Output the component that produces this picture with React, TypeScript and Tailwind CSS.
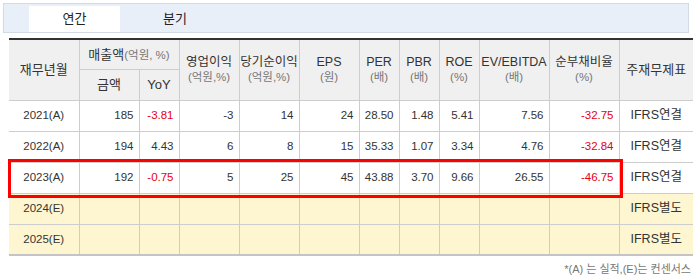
const FONT = { fontFamily: '"Liberation Sans", "Noto Sans CJK KR", sans-serif' };

type Row = {
  label: string;
  values: (string | null)[];
  basis: string;
  estimate?: boolean;
};

const ROWS: Row[] = [
  { label: "2021(A)", values: ["185", "-3.81", "-3", "14", "24", "28.50", "1.48", "5.41", "7.56", "-32.75"], basis: "IFRS연결" },
  { label: "2022(A)", values: ["194", "4.43", "6", "8", "15", "35.33", "1.07", "3.34", "4.76", "-32.84"], basis: "IFRS연결" },
  { label: "2023(A)", values: ["192", "-0.75", "5", "25", "45", "43.88", "3.70", "9.66", "26.55", "-46.75"], basis: "IFRS연결" },
  { label: "2024(E)", values: Array(10).fill(null), basis: "IFRS별도", estimate: true },
  { label: "2025(E)", values: Array(10).fill(null), basis: "IFRS별도", estimate: true },
];

// red values: YoY and 순부채비율 when negative
const RED_COLS = [1, 9];

function TwoLine({ top, unit }: { top: string; unit: string }) {
  return (
    <div className="flex flex-col items-center whitespace-nowrap leading-[15px]">
      <span className="text-[12.5px] text-[#333]">{top}</span>
      <span className="text-[11.5px] text-[#777]">{unit}</span>
    </div>
  );
}

export default function App() {
  const th = "border-x border-[#cdcdcd] bg-[#f0f0f0] font-normal p-0 whitespace-nowrap";
  return (
    <div className="relative h-[278px] w-[693px] overflow-hidden bg-white text-[#333]" style={FONT}>
      {/* tabs */}
      <div className="ml-[3px] mt-[3px] flex h-[30px] w-[686px] items-end border border-[#d3dae6] bg-[#e8eff9] pl-[25px]">
        <div className="flex h-[26px] w-[91px] items-center justify-center bg-white text-[13px] text-[#222]">연간</div>
        <div className="flex h-[26px] w-[110px] items-center justify-center text-[13px] text-[#222]">분기</div>
      </div>

      {/* table */}
      <table className="ml-[9px] mt-[5px] w-[684px] table-fixed border-collapse border-t-2 border-b-2 border-t-[#333] border-b-[#c4c4c4] text-center">
        <colgroup>
          <col className="w-[70px]" />
          <col className="w-[60px]" />
          <col className="w-[40px]" />
          <col className="w-[60px]" />
          <col className="w-[60px]" />
          <col className="w-[60px]" />
          <col className="w-[40px]" />
          <col className="w-[40px]" />
          <col className="w-[40px]" />
          <col className="w-[70px]" />
          <col className="w-[70px]" />
          <col className="w-[74px]" />
        </colgroup>
        <thead>
          <tr className="h-[30px]">
            <th rowSpan={2} className={`${th} border-l-0 text-[13px]`}>재무년월</th>
            <th colSpan={2} className={`${th} border-b text-[13px]`}>
              매출액<span className="text-[11.5px] text-[#777]">(억원, %)</span>
            </th>
            <th rowSpan={2} className={th}><TwoLine top="영업이익" unit="(억원,%)" /></th>
            <th rowSpan={2} className={th}><TwoLine top="당기순이익" unit="(억원,%)" /></th>
            <th rowSpan={2} className={th}><TwoLine top="EPS" unit="(원)" /></th>
            <th rowSpan={2} className={th}><TwoLine top="PER" unit="(배)" /></th>
            <th rowSpan={2} className={th}><TwoLine top="PBR" unit="(배)" /></th>
            <th rowSpan={2} className={th}><TwoLine top="ROE" unit="(%)" /></th>
            <th rowSpan={2} className={th}><TwoLine top="EV/EBITDA" unit="(배)" /></th>
            <th rowSpan={2} className={th}><TwoLine top="순부채비율" unit="(%)" /></th>
            <th rowSpan={2} className={`${th} border-r-0 text-[13px]`}>주재무제표</th>
          </tr>
          <tr className="h-[31px]">
            <th className={`${th} text-[13px]`}>금액</th>
            <th className={`${th} text-[13px]`}>YoY</th>
          </tr>
        </thead>
        <tbody>
          {ROWS.map((row) => (
            <tr
              key={row.label}
              className={`h-[31px] border-t border-[#cdcdcd] text-[11.5px] ${row.estimate ? "bg-[#fdf6d0]" : "bg-white"}`}
            >
              <td className="border-r border-[#cdcdcd] p-0">{row.label}</td>
              {row.values.map((v, i) => (
                <td
                  key={i}
                  className={`border-x border-[#cdcdcd] p-0 pr-[5px] text-right ${
                    v && v.startsWith("-") && RED_COLS.includes(i) ? "text-[#e60012]" : "text-[#333]"
                  }`}
                >
                  {v}
                </td>
              ))}
              <td className="border-l border-[#cdcdcd] p-0 text-[12.5px]">{row.basis}</td>
            </tr>
          ))}
        </tbody>
      </table>

      {/* highlight */}
      <div className="absolute left-[8px] top-[159px] h-[39px] w-[615px] border-[3px] border-[#ff0000]" />

      <div className="mr-[2px] mt-[5px] text-right text-[11px] text-[#777]">*(A) 는 실적,(E)는 컨센서스</div>
    </div>
  );
}
